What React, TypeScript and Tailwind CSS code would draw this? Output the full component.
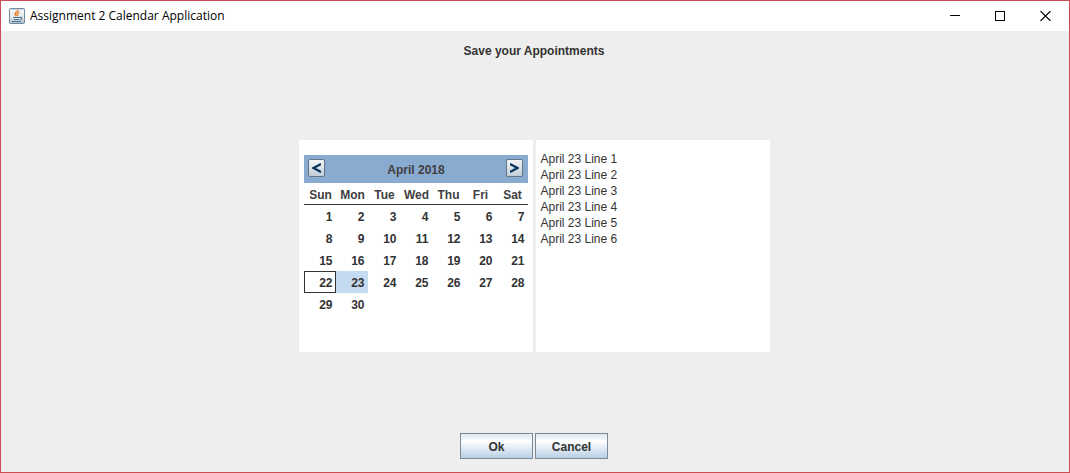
import { useState } from "react";

const DAY_NAMES = ["Sun", "Mon", "Tue", "Wed", "Thu", "Fri", "Sat"];

const WEEKS: (number | null)[][] = [
  [1, 2, 3, 4, 5, 6, 7],
  [8, 9, 10, 11, 12, 13, 14],
  [15, 16, 17, 18, 19, 20, 21],
  [22, 23, 24, 25, 26, 27, 28],
  [29, 30, null, null, null, null, null],
];

const TODAY = 22;

const NOTES = [1, 2, 3, 4, 5, 6].map((n) => `April 23 Line ${n}`).join("\n");

function JavaIcon() {
  return (
    <svg width="16" height="16" viewBox="0 0 16 16" aria-hidden="true">
      <defs>
        <linearGradient id="cup-bg" x1="0" y1="0" x2="0" y2="1">
          <stop offset="0" stopColor="#b9c6d0" />
          <stop offset="0.15" stopColor="#f4f6f8" />
          <stop offset="0.6" stopColor="#e4e9ed" />
          <stop offset="1" stopColor="#a9bac8" />
        </linearGradient>
      </defs>
      <rect x="0.5" y="0.5" width="15" height="15" rx="1" fill="url(#cup-bg)" stroke="#6f8aa0" />
      <path d="M9 1.8C9.4 4 5.2 4.4 6 6.4c.2.7.9 1.1 1.2 1.9M10.6 4.4C8.6 5.2 7.6 6 8.4 7c.3.5.1 1-.2 1.3" fill="none" stroke="#e8832f" strokeWidth="1.5" />
      <path d="M4 9.5h7M4.8 11.5h5.4M3 13.5h9M11 9.4c2.6-.5 2.4 1.8.2 2.3" fill="none" stroke="#4b7699" strokeWidth="1.1" />
    </svg>
  );
}

function ArrowButton({ label, points }: { label: string; points: string }) {
  return (
    <button
      type="button"
      aria-label={label}
      className="flex h-[18px] w-[17px] items-center justify-center rounded-xs border border-[#637688] bg-linear-to-b from-[#f4f6f8] to-[#c3ced8]"
    >
      <svg width="9" height="10" viewBox="0 0 9 10" aria-hidden="true">
        <polyline points={points} fill="none" stroke="#06345f" strokeWidth="2.2" />
      </svg>
    </button>
  );
}

function Calendar() {
  const [selected, setSelected] = useState(23);

  return (
    <section className="h-[212px] w-[234px] bg-white px-[5px] pt-[15px] font-bold">
      <header className="flex h-7 w-56 items-center justify-between bg-[#8aabd0] pr-[5px] pb-0.5 pl-1">
        <ArrowButton label="Previous month" points="9,1 1.5,5 9,9" />
        <h2 className="pt-1 pl-0.5 text-[#404040]">April 2018</h2>
        <ArrowButton label="Next month" points="0,1 7.5,5 0,9" />
      </header>
      <table className="w-56 table-fixed border-collapse">
        <thead>
          <tr className="h-[22px] shadow-[inset_0_-1px_0_#333333]">
            {DAY_NAMES.map((day) => (
              <th key={day} scope="col" className="p-0 pt-0.5 pl-0.5 text-center text-[#404040]">
                {day}
              </th>
            ))}
          </tr>
        </thead>
        <tbody>
          {WEEKS.map((week, row) => (
            <tr key={row} className="h-[22px]">
              {week.map((day, col) => (
                <td key={col} className="p-0">
                  {day !== null && (
                    <button
                      type="button"
                      aria-pressed={day === selected}
                      onClick={() => setSelected(day)}
                      className={`block h-[22px] w-full border pt-0.5 pr-0.5 text-right ${
                        day === TODAY ? "border-[#333333]" : "border-transparent"
                      } ${day === selected ? "bg-[#c4daf0]" : ""}`}
                    >
                      {day}
                    </button>
                  )}
                </td>
              ))}
            </tr>
          ))}
        </tbody>
      </table>
    </section>
  );
}

function TitleBar() {
  return (
    <header className="flex h-[30px] items-center bg-white pl-2 text-black">
      <JavaIcon />
      <h1 className="flex-1 pl-[5px] font-['Open_Sans','Noto_Sans',sans-serif] text-xs">
        Assignment 2 Calendar Application
      </h1>
      <button type="button" aria-label="Minimize" className="flex h-full w-[45px] items-center justify-center">
        <svg width="10" height="10" viewBox="0 0 10 10" aria-hidden="true">
          <path d="M0 4.5h10" stroke="#000" />
        </svg>
      </button>
      <button type="button" aria-label="Maximize" className="flex h-full w-[45px] items-center justify-center">
        <svg width="10" height="10" viewBox="0 0 10 10" aria-hidden="true">
          <rect x="0.5" y="0.5" width="9" height="9" fill="none" stroke="#000" />
        </svg>
      </button>
      <button type="button" aria-label="Close" className="flex h-full w-[47px] items-center justify-center">
        <svg width="11" height="10" viewBox="0 0 11 10" aria-hidden="true">
          <path d="M0.5 0l10 10M10.5 0L0.5 10" stroke="#000" strokeWidth="1.1" />
        </svg>
      </button>
    </header>
  );
}

const ACTION =
  "h-[26px] w-[73px] border border-[#7a8a99] bg-linear-to-b from-[#dde8f3] via-white via-30% to-[#b8cfe5] pt-0.5 font-bold";

export default function App() {
  return (
    <div className="flex min-h-screen flex-col border border-[#cb4f52] bg-[#eeeeee] font-['Liberation_Sans',Arial,sans-serif] text-xs text-[#333333]">
      <TitleBar />
      <main className="flex flex-1 flex-col items-center pt-3 pr-0.5 pb-[13px]">
        <label htmlFor="notes" className="font-bold">
          Save your Appointments
        </label>
        <div className="flex flex-1 items-center gap-[3px]">
          <Calendar />
          <textarea
            id="notes"
            defaultValue={NOTES}
            className="block h-[212px] w-[234px] resize-none bg-white px-[5px] pt-[11px] outline-none"
          />
        </div>
        <div className="flex gap-0.5">
          <button type="button" className={ACTION}>
            Ok
          </button>
          <button type="button" className={ACTION}>
            Cancel
          </button>
        </div>
      </main>
    </div>
  );
}
